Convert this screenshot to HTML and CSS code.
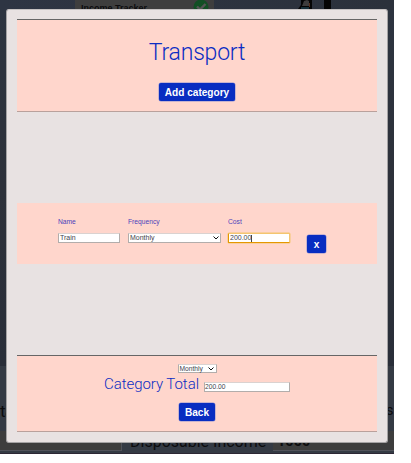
FILE: index.html
```html
<!DOCTYPE html>
<html lang="en">
<head>
<meta charset="utf-8">
<title>Transport</title>
<link rel="stylesheet" href="styles.css">
</head>
<body>
<div class="screen">
  <div class="page">
    <div class="page-top">
      <div class="tracker">
        <span>Income Tracker</span>
        <svg width="16" height="16" viewBox="0 0 16 16"><circle cx="8" cy="8" r="7.5" fill="#124f24"/><path d="M4 7.500l3 3 5.500-5.500" fill="none" stroke="#555" stroke-width="2.400"/></svg>
      </div>
      <svg class="figure" width="36" height="12" viewBox="0 0 36 12"><path d="M1 9L4 5V0h11v9z" fill="#050505"/><path d="M5 6L7 1l3-1 2 1v5z" fill="#3d3c3c"/><path d="M4 7h8v2H4z" fill="#17303a"/><path d="M12 3h1v4h-1z" fill="#57301c"/><path d="M27 0h7v10h-7z" fill="#050505"/></svg>
    </div>
    <div class="page-mid"></div>
    <div class="page-low">
      <div class="low-labels"><span>ta</span><span class="tail">s</span></div>
      <div class="low-fields"><span class="field"></span><span class="label">Disposable Income</span><b class="amount">1000</b></div>
    </div>
  </div>
  <div class="modal">
    <header class="panel head">
      <h1>Transport</h1>
      <button class="btn">Add category</button>
    </header>
    <section class="items">
      <div class="item">
        <label class="col name">Name<span class="input">Train</span></label>
        <label class="col freq">Frequency<span class="input select">Monthly<svg width="6" height="4" viewBox="0 0 6 4"><path d="M.5.5L3 3 5.500.5" fill="none" stroke="#111"/></svg></span></label>
        <label class="col cost">Cost<span class="input focus">200.00<i class="caret"></i></span></label>
        <button class="btn remove">x</button>
      </div>
    </section>
    <footer class="panel foot">
      <span class="input select period">Monthly<svg width="6" height="4" viewBox="0 0 6 4"><path d="M.5.5L3 3 5.500.5" fill="none" stroke="#111"/></svg></span>
      <div class="total"><span class="total-label">Category Total</span><span class="input sum">200.00</span></div>
      <button class="btn">Back</button>
    </footer>
  </div>
</div>
</body>
</html>
```
FILE: styles.css
```css
* { box-sizing: border-box; }
body { margin: 0; background: #fff; font-family: Roboto, sans-serif; }
.screen { position: relative; width: 394px; height: 454px; overflow: hidden; }
.page { display: flex; flex-direction: column; height: 454px; background: #2d323c; border-bottom: 1px solid #2c2734; color: #0c0c0e; }
.page-top { display: flex; height: 10px; padding-left: 75px; background: linear-gradient(90deg, #2e3543, #2b313b); }
.tracker { display: flex; flex: none; justify-content: space-between; width: 139px; height: 10px; padding: 0 5px 0 6px; background: #3e3e3e; font: bold 9px/16px "Liberation Sans", sans-serif; }
.tracker span { white-space: nowrap; }
.tracker svg { flex: none; margin-top: -1px; }
.figure { flex: none; margin-left: 83px; }
.page-mid { height: 356px; background: linear-gradient(#2d3440, #2d313a 50%, #292e39); }
.page-low { flex: 1; background: #343a44; }
.low-labels { display: flex; justify-content: space-between; height: 65px; padding-top: 34px; font-size: 17px; line-height: 22px; }
.low-labels span { letter-spacing: -.6px; }
.low-labels .tail { width: 8px; letter-spacing: 0; font-size: 14.5px; }
.low-fields { display: flex; height: 20px; font-size: 16px; line-height: 21px; }
.field { width: 122px; background: #3d3d3d; border-right: 1px solid #50525a; border-bottom: 1px solid #50525a; }
.label { width: 151px; padding-left: 8px; white-space: nowrap; }
.amount { flex: 1; padding-left: 4px; background: #3d3d3d; border-bottom: 1px solid #50525a; font-size: 14.5px; }
.modal { position: absolute; left: 6px; top: 9px; display: flex; flex-direction: column; width: 382px; height: 434px; padding: 9px 10px 10px; border: 1px solid #a5a3a4; border-top-color: #c5c1c1; border-radius: 3px; background: #e8e2e2; color: #0b2dc3; }
.panel { display: flex; flex-direction: column; align-items: center; border-top: 1px solid #666; border-bottom: 1px solid #b9a19c; background: #ffd6cc; }
.head { height: 93px; padding-top: 19px; }
h1 { margin: 0; font-size: 23px; font-weight: 300; letter-spacing: -.2px; line-height: 28px; }
.btn { height: 18px; padding: 0 6px; border: 0; border-radius: 2px; background: #082dc1; box-shadow: 0 0 0 .5px #8f8fd0; color: #fff; font: bold 10.1px/18px "Liberation Sans", sans-serif; white-space: nowrap; }
.head .btn { width: 76px; margin-top: 16px; padding: 1px 0 0; }
.items { display: flex; flex: 1; flex-direction: column; justify-content: center; }
.item { display: flex; align-items: flex-start; height: 61px; padding: 14px 0 0 41px; background: #ffd6cc; }
.col { display: flex; flex-direction: column; gap: 7px; color: #4c42bb; font: 6.7px/9px "Liberation Sans", sans-serif; }
.name { width: 62px; margin-right: 8px; }
.freq { width: 93px; margin-right: 7px; }
.cost { width: 62px; }
.input { display: flex; align-items: center; height: 10px; padding: 0 1px; border: 1px solid #b2adab; border-top-color: #dad2d0; background: #fff; color: #443f4c; font: 7px/8px "Liberation Sans", sans-serif; }
.select { justify-content: space-between; }
.focus { border: 1px solid #e59700; border-top-color: #f4c56f; border-right-color: #f4c56f; border-radius: 1px; box-shadow: 0 0 0 .5px #f4c56f; }
.caret { width: 1px; height: 7px; background: #444; }
.item .remove { width: 19px; margin: 18px 0 0 17px; padding: 1px 0 0; }
.foot { height: 77px; padding-top: 8px; }
.period { width: 39px; height: 9px; padding: 0 2px 0 1px; font-size: 6.7px; }
.total { display: flex; gap: 5px; height: 24px; font-size: 15px; font-weight: 300; line-height: 23px; white-space: nowrap; }
.total-label { width: 95px; letter-spacing: -.05px; }
.sum { width: 86px; margin-top: 9px; padding: 0; font-size: 6.7px; }
.foot .btn { width: 36px; margin-top: 6px; padding: 1px 0 0; }
```
